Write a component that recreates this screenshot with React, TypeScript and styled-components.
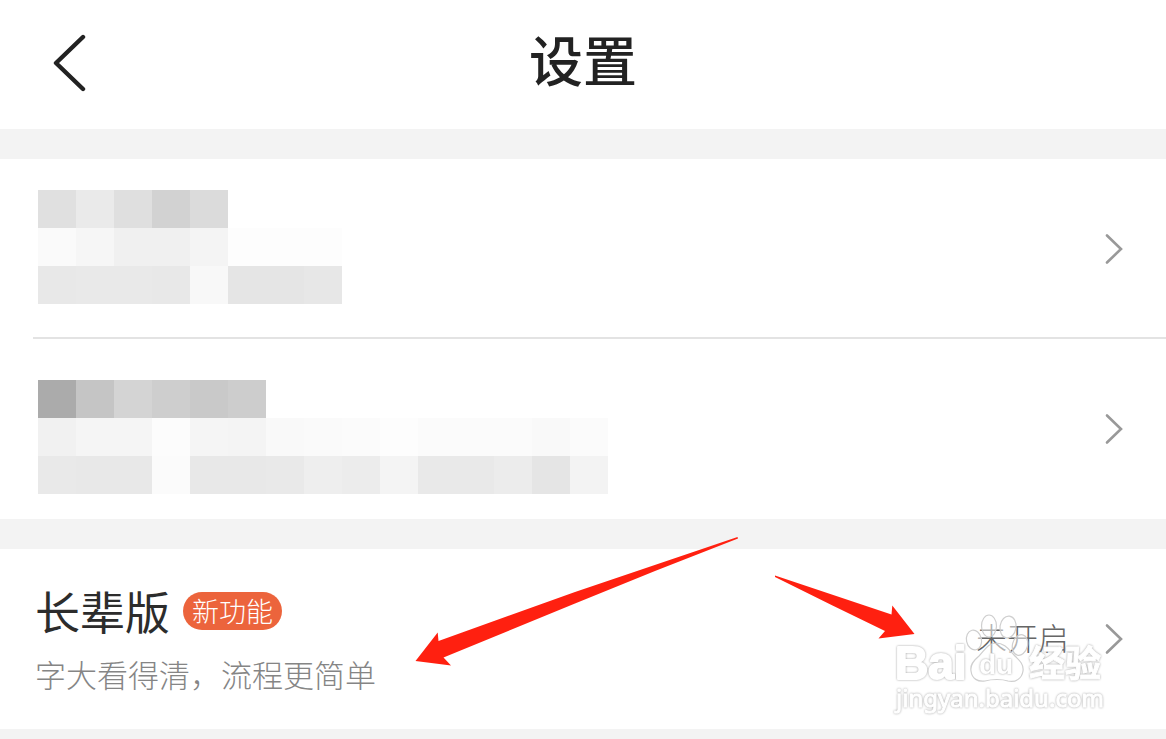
import React from "react";
import styled, { createGlobalStyle } from "styled-components";

const GlobalStyle = createGlobalStyle`
  *, *::before, *::after { box-sizing: border-box; }
  html, body { margin: 0; background: #f3f3f3; }
  body {
    font-family: "Noto Sans CJK SC", "Liberation Sans", sans-serif;
    color: #222;
  }
`;

const Page = styled.main`
  display: flex;
  flex-direction: column;
  gap: 30px;
  overflow: hidden;
`;

const Header = styled.header`
  display: grid;
  grid-template-columns: 1fr auto 1fr;
  align-items: center;
  padding: 22px 44px 27px;
  background: #fff;
`;

const BackButton = styled.button`
  display: flex;
  justify-self: start;
  padding: 8px;
  border: 0;
  background: none;
  cursor: pointer;
`;

const Title = styled.h1`
  margin: 0;
  padding-bottom: 6px;
  font-size: 54px;
  line-height: 74px;
  font-weight: 500;
`;

const Section = styled.section`
  background: #fff;
`;

const Row = styled.a`
  position: relative;
  display: flex;
  align-items: center;
  justify-content: space-between;
  min-height: 180px;
  padding: 0 43px 0 38px;
  color: inherit;
  text-decoration: none;
`;

const Divider = styled.hr`
  height: 2px;
  margin: -2px 0 0 33px;
  border: 0;
  background: #e3e3e3;
`;

const Mosaic = styled.span<{ $columns: number; $top: number }>`
  display: grid;
  align-self: flex-start;
  padding-top: ${(p) => p.$top}px;
  grid-template-columns: repeat(${(p) => p.$columns}, 38px);
  grid-auto-rows: 38px;
`;

const MosaicCell = styled.span<{ $tone: string }>`
  background: #${(p) => p.$tone.repeat(3)};
`;

const RowText = styled.span`
  display: flex;
  flex-direction: column;
  padding-top: 6px;
  margin-left: -3px;
`;

const RowHeading = styled.span`
  display: flex;
  align-items: center;
  gap: 13px;
`;

const RowTitle = styled.span`
  font-size: 45px;
  line-height: 64px;
  color: #2c2c2c;
`;

const Badge = styled.span`
  padding: 0 9px;
  border-radius: 19px;
  background: #ec643c;
  color: #fff;
  font-size: 27px;
  line-height: 38px;
  font-weight: 300;
`;

const RowNote = styled.span`
  font-size: 31px;
  line-height: 62px;
  font-weight: 300;
  color: #858585;
`;

const RowEnd = styled.span`
  display: flex;
  align-items: center;
  gap: 36px;
`;

const Status = styled.span`
  padding-bottom: 4px;
  font-size: 31px;
  line-height: 44px;
  font-weight: 300;
  color: #666;
`;

const Pointer = styled.svg<{ $left?: number; $right?: number; $top: number }>`
  position: absolute;
  top: ${(p) => p.$top}px;
  ${(p) => (p.$left !== undefined ? `left: ${p.$left}px;` : "")}
  ${(p) => (p.$right !== undefined ? `right: ${p.$right}px;` : "")}
  fill: #ff2010;
  pointer-events: none;
`;

const Watermark = styled.svg`
  position: absolute;
  right: 56px;
  bottom: 9px;
  pointer-events: none;
  fill: #fff;
`;

const WatermarkPaw = styled.g`
  fill: rgba(255, 255, 255, 0.5);
  stroke: #cfcfcf;
  stroke-width: 1.2;
`;

const WatermarkText = styled.text<{ $size: number; $family: string; $weight: number; $stroke: number }>`
  font-family: ${(p) => p.$family}, sans-serif;
  font-size: ${(p) => p.$size}px;
  font-weight: ${(p) => p.$weight};
  stroke: #fff;
  stroke-width: ${(p) => p.$stroke};
  stroke-linejoin: round;
  filter: drop-shadow(0 0 1px #a4a4a4);
`;

const Chevron = () => (
  <svg width="18" height="32" viewBox="0 0 18 32" fill="none" stroke="#999" strokeWidth="2.6" strokeLinecap="round" aria-hidden="true">
    <path d="M2 2.5 16 16 2 29.5" />
  </svg>
);

const profileTones = [
  ["e0", "ea", "df", "d2", "db", "ff", "ff", "ff"],
  ["fa", "f6", "f0", "f0", "f4", "fd", "fd", "fd"],
  ["e8", "e9", "e9", "e8", "f8", "e5", "e5", "e7"],
];

const accountTones = [
  ["ab", "c5", "d4", "ce", "c9", "cd", "ff", "ff", "ff", "ff", "ff", "ff", "ff", "ff", "ff"],
  ["f1", "f5", "f5", "fc", "f5", "f4", "f9", "fa", "fb", "fd", "fb", "fb", "fb", "f9", "fb"],
  ["e9", "e8", "e8", "fb", "e8", "e8", "e9", "ee", "ec", "f4", "e9", "e9", "ec", "e5", "f3"],
];

const HiddenText = ({ tones, top }: { tones: string[][]; top: number }) => (
  <Mosaic $columns={tones[0].length} $top={top} aria-hidden="true">
    {tones.flatMap((line, y) => line.map((tone, x) => <MosaicCell key={`${y}-${x}`} $tone={tone} />))}
  </Mosaic>
);

export default function App() {
  return (
    <>
      <GlobalStyle />
      <Page>
        <Header>
          <BackButton type="button" aria-label="返回">
            <svg width="36" height="60" viewBox="0 0 36 60" fill="none" stroke="#222" strokeWidth="4.4" strokeLinecap="round" strokeLinejoin="round">
              <path d="M31 5 4 31 31 57" />
            </svg>
          </BackButton>
          <Title>设置</Title>
        </Header>

        <Section>
          <Row href="#profile" aria-label="个人资料">
            <HiddenText tones={profileTones} top={31} />
            <Chevron />
          </Row>
          <Divider />
          <Row href="#account" aria-label="账号">
            <HiddenText tones={accountTones} top={41} />
            <Chevron />
          </Row>
        </Section>

        <Section>
          <Row href="#senior">
            <RowText>
              <RowHeading>
                <RowTitle>长辈版</RowTitle>
                <Badge>新功能</Badge>
              </RowHeading>
              <RowNote>字大看得清，流程更简单</RowNote>
            </RowText>
            <RowEnd>
              <Status>未开启</Status>
              <Chevron />
            </RowEnd>

            <Pointer $left={415} $top={-13} width="324" height="132" viewBox="415 536 324 132" aria-hidden="true">
              <path d="M737.5 537 575 592 438.5 641 437.7 632.5 415.5 661 451 665.5 443.5 657.5 575 603.5 655 571 738 538.5Z" />
            </Pointer>
            <Pointer $right={251} $top={25} width="141" height="68" viewBox="774 574 141 68" aria-hidden="true">
              <path d="M775 575.5 891.5 614.5 892.3 605.5 914.5 634 878.5 638.5 885 631 831.5 605 775 577Z" />
            </Pointer>
            <Watermark width="220" height="110" viewBox="890 610 220 110" aria-hidden="true">
              <WatermarkPaw>
                <ellipse cx="974" cy="640" rx="7.5" ry="10" transform="rotate(-12 974 640)" />
                <ellipse cx="989" cy="626" rx="7.5" ry="11" />
                <ellipse cx="1008" cy="627" rx="8" ry="11" transform="rotate(8 1008 627)" />
                <ellipse cx="1020" cy="645" rx="7.5" ry="10.5" transform="rotate(15 1020 645)" />
                <path d="M996 643C988 643 985 650 979 656C973 661 970 665 971 671C972 679 978 682 985 681C992 679 1002 679 1008 681C1016 683 1022 678 1023 671C1024 664 1019 660 1014 655C1009 650 1005 643 996 643Z" />
              </WatermarkPaw>
              <WatermarkText x="895" y="679" $family="Liberation Sans" $weight={700} $size={46} $stroke={2}>Bai</WatermarkText>
              <WatermarkText x="979" y="674" $family="Liberation Sans" $weight={700} $size={28} $stroke={0}>du</WatermarkText>
              <WatermarkText x="1029" y="677" $family="Noto Sans CJK SC" $weight={700} $size={36} $stroke={1}>经验</WatermarkText>
              <WatermarkText x="896" y="707" $family="Noto Sans" $weight={400} $size={24} $stroke={1}>jingyan.baidu.com</WatermarkText>
            </Watermark>
          </Row>
        </Section>
      </Page>
    </>
  );
}
